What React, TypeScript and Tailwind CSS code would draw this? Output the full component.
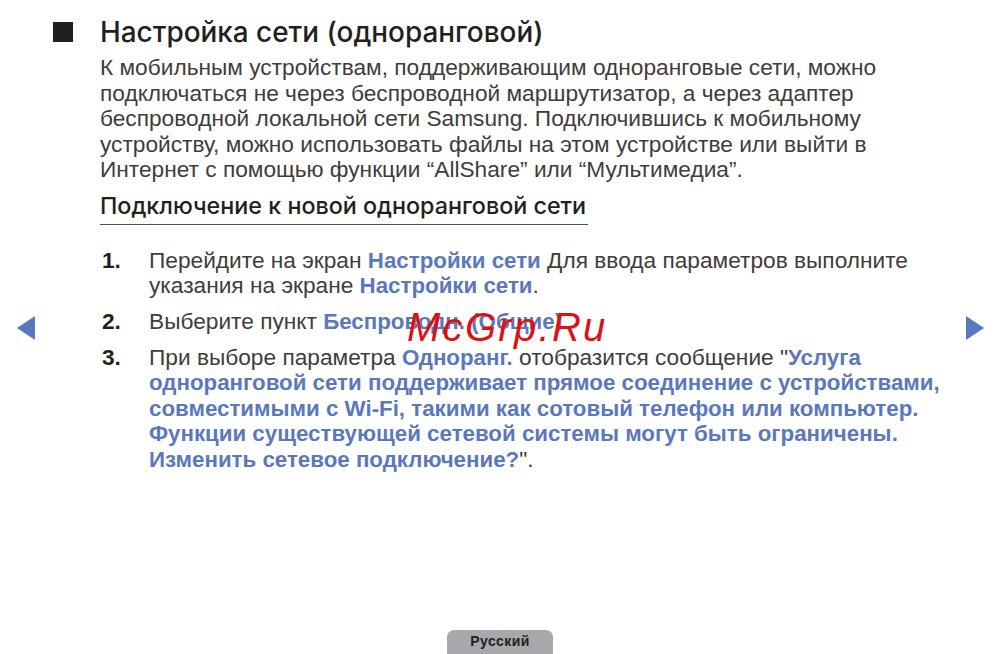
import React from 'react';

const Link: React.FC<{ children: React.ReactNode }> = ({ children }) => (
  <span className="text-[22.3px] font-bold text-[#5a78bd]">{children}</span>
);

const Step: React.FC<{ num: string; className?: string; children: React.ReactNode }> = ({ num, className, children }) => (
  <div className={`flex ${className ?? ''}`}>
    <div className="w-[49px] shrink-0 pl-[2px] font-bold text-[#231f20]">{num}</div>
    <div>{children}</div>
  </div>
);

export default function App() {
  return (
    <div className="relative flex h-[654px] w-[1000px] flex-col overflow-hidden bg-white font-['Liberation_Sans',sans-serif] text-[#231f20]">
      {/* Page arrows */}
      <svg className="absolute left-[17px] top-[316px]" width="18" height="24" viewBox="0 0 18 24">
        <path d="M18 0V24L0 12Z" fill="#5a78bd" />
      </svg>
      <svg className="absolute left-[966px] top-[316px]" width="18" height="24" viewBox="0 0 18 24">
        <path d="M0 0V24L18 12Z" fill="#5a78bd" />
      </svg>

      {/* Watermark */}
      <div className="absolute left-[407px] top-[303px] text-[40px] italic leading-[48px] tracking-[2.3px] text-[#e01010]">McGrp.Ru</div>

      <div className="flex-1 pt-[15px]">
        {/* Title */}
        <div className="flex items-center">
          <div className="ml-[53px] mr-[27px] h-[20px] w-[20px] bg-[#231f20]" />
          <h1 className="font-['Inter',sans-serif] text-[27.9px] font-medium leading-[34px] whitespace-nowrap">Настройка сети (одноранговой)</h1>
        </div>

        <div className="ml-[100px] text-[22.7px] leading-[25.5px]">
          <p className="mt-[6px] whitespace-nowrap text-[#403c3d]">
            К мобильным устройствам, поддерживающим одноранговые сети, можно
            <br />
            подключаться не через беспроводной маршрутизатор, а через адаптер
            <br />
            беспроводной локальной сети Samsung. Подключившись к мобильному
            <br />
            устройству, можно использовать файлы на этом устройстве или выйти в
            <br />
            Интернет с помощью функции “AllShare” или “Мультимедиа”.
          </p>

          <h2 className="mt-[10px] w-[488px] whitespace-nowrap border-b border-[#55504f] pb-[5px] font-['Inter',sans-serif] text-[23.3px] font-medium leading-[26px]">
            Подключение к новой одноранговой сети
          </h2>

          <div className="mt-[23px] text-[#403c3d]">
            <Step num="1.">
              <div className="whitespace-nowrap">
                Перейдите на экран <Link>Настройки сети</Link> Для ввода параметров выполните
              </div>
              <div className="whitespace-nowrap">
                указания на экране <Link>Настройки сети</Link>.
              </div>
            </Step>
            <Step num="2." className="mt-[10px]">
              <div className="whitespace-nowrap">
                Выберите пункт <Link>Беспроводн. (Общие)</Link>
              </div>
            </Step>
            <Step num="3." className="mt-[10.5px]">
              <div className="whitespace-nowrap">
                При выборе параметра <Link>Одноранг.</Link> отобразится сообщение "<Link>Услуга</Link>
              </div>
              <div className="whitespace-nowrap">
                <Link>одноранговой сети поддерживает прямое соединение с устройствами,</Link>
              </div>
              <div className="whitespace-nowrap">
                <Link>совместимыми с Wi-Fi, такими как сотовый телефон или компьютер.</Link>
              </div>
              <div className="whitespace-nowrap">
                <Link>Функции существующей сетевой системы могут быть ограничены.</Link>
              </div>
              <div className="whitespace-nowrap">
                <Link>Изменить сетевое подключение?</Link>".
              </div>
            </Step>
          </div>
        </div>
      </div>

      {/* Language tab */}
      <div className="mx-auto flex h-[24px] w-[106px] justify-center rounded-t-[7px] bg-[#a7a9ac] pt-[3px] text-[14px] font-bold leading-[16px] tracking-[0.4px] text-[#231f20]">
        Русский
      </div>
    </div>
  );
}
